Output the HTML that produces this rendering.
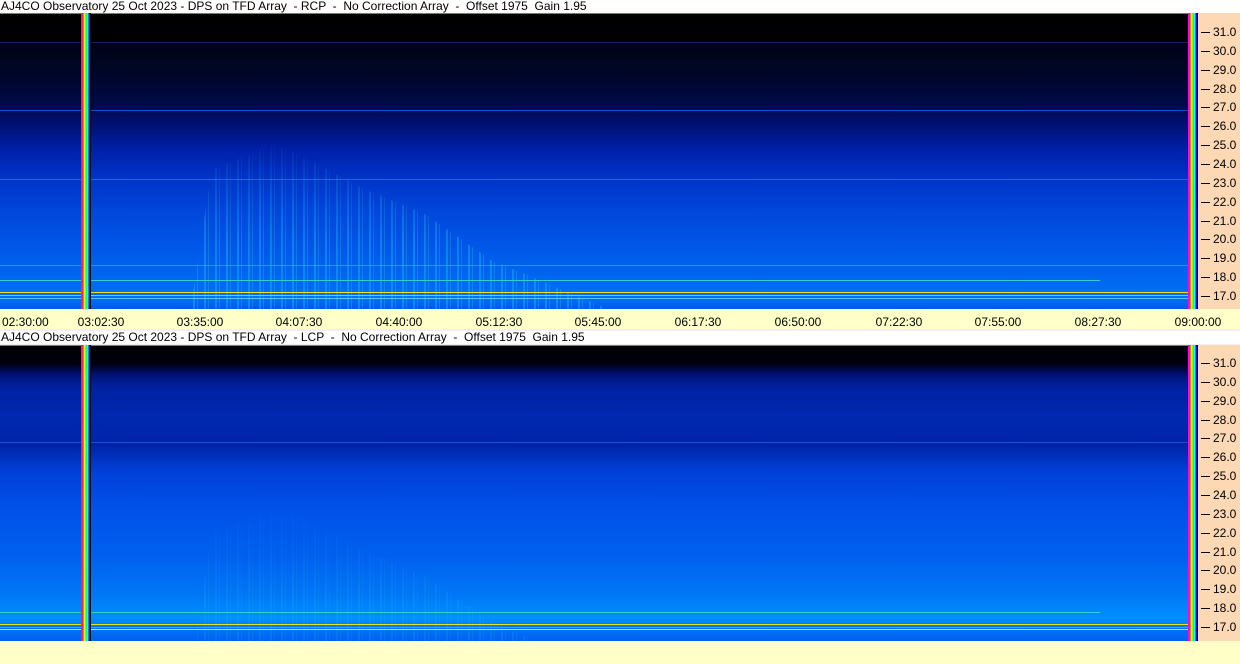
<!DOCTYPE html>
<html><head><style>
*{margin:0;padding:0}
body{width:1240px;height:664px;background:#f0f0f0;position:relative;overflow:hidden;font-family:"Liberation Sans",sans-serif}
.title{position:absolute;left:0;width:1240px;height:13px;background:#fff;font-size:12px;line-height:13px;color:#000;padding-left:1px;white-space:pre}
.panel{position:absolute;left:0;width:1190px;overflow:hidden;border-top:1px solid #00a0ff}
.p1{top:13px;height:295px;background:linear-gradient(#000000 0px,#000004 28px,#000418 32px,#000628 60px,#000a48 90px,#001070 110px,#0020a8 135px,#0034c8 165px,#0048dc 200px,#0058e8 235px,#0068f0 265px,#0070f4 285px,#0058e8 295px)}
.p2{top:345px;height:295px;background:linear-gradient(#000000 0px,#000010 18px,#001070 28px,#0020a0 40px,#0028b0 70px,#0024a8 100px,#0040d8 125px,#0050e8 160px,#0060ee 210px,#0078f6 250px,#0090ff 272px,#0070f4 285px,#0060f0 295px)}
.axis{position:absolute;left:1198px;width:42px;background:#fcd8b4}
.strip{position:absolute;width:10px;background:linear-gradient(90deg,#ff00ff 0 1px,#ff2060 1px 2px,#ff8000 2px 3px,#ffff00 3px 4px,#80ff00 4px 5px,#00ff80 5px 6px,#00ffff 6px 7px,#0080ff 7px 8px,#0000c0 8px 9px,#000 9px 10px)}
.lbl{position:absolute;font-size:12px;color:#000;left:1213px}
.tick{position:absolute;left:1201px;width:9px;height:1px;background:#000}
.time{position:absolute;top:309px;left:0;width:1240px;height:20px;background:#ffffc8}
.time span{position:absolute;top:6px;font-size:12px;transform:translateX(-50%)}
.line{position:absolute;left:0;width:1190px;height:1px}
.burst{position:absolute;left:190px;top:120px;width:430px;height:180px;background:repeating-linear-gradient(90deg,rgba(0,200,255,0) 0 3px,rgba(40,220,255,.3) 3px 5px,rgba(0,200,255,0) 5px 7px,rgba(80,240,220,.2) 7px 8px,rgba(0,0,0,0) 8px 11px);clip-path:polygon(0 100%,5% 20%,20% 5%,40% 30%,55% 45%,70% 70%,100% 100%);-webkit-mask:linear-gradient(transparent,#000 60%)}
</style></head><body>
<div class="title">AJ4CO Observatory 25 Oct 2023 - DPS on TFD Array  - RCP  -  No Correction Array  -  Offset 1975  Gain 1.95</div>
<div class="panel p1">
 <div class="line" style="top:28px;background:#102070"></div>
 <div class="line" style="top:96px;background:#1050c8"></div>
 <div class="line" style="top:165px;background:#1868e0"></div>
 <div class="burst"></div>
 <div class="line" style="top:251px;background:#40b0ff;opacity:.6"></div>
 <div class="line" style="top:266px;background:#30d0d0;width:1100px"></div>
 <div class="line" style="top:278px;background:#e8e020"></div>
 <div class="line" style="top:281px;background:#90e040"></div>
 <div class="line" style="top:284px;background:#60c0ff"></div>
</div>
<div class="strip" style="left:81px;top:13px;height:296px"></div>
<div class="strip" style="left:1188px;top:13px;height:296px"></div>
<div class="axis" style="top:13px;height:296px"></div>
<div class="time">
<span style="left:2px;transform:none">02:30:00</span><span style="left:101px">03:02:30</span><span style="left:200px">03:35:00</span><span style="left:299px">04:07:30</span><span style="left:399px">04:40:00</span><span style="left:499px">05:12:30</span><span style="left:598px">05:45:00</span><span style="left:698px">06:17:30</span><span style="left:798px">06:50:00</span><span style="left:899px">07:22:30</span><span style="left:998px">07:55:00</span><span style="left:1098px">08:27:30</span><span style="left:1198px">09:00:00</span>
</div>
<div class="title" style="top:331px">AJ4CO Observatory 25 Oct 2023 - DPS on TFD Array  - LCP  -  No Correction Array  -  Offset 1975  Gain 1.95</div>
<div class="panel p2">
 <div class="line" style="top:96px;background:#1850d0"></div>
 <div class="burst" style="opacity:.4;top:150px"></div>
 <div class="line" style="top:266px;background:#30d0d0;width:1100px"></div>
 <div class="line" style="top:278px;background:#e8e020"></div>
 <div class="line" style="top:281px;background:#e06090"></div>
 <div class="line" style="top:283px;background:#e0e040"></div>
</div>
<div class="strip" style="left:81px;top:345px;height:296px"></div>
<div class="strip" style="left:1188px;top:345px;height:296px"></div>
<div class="axis" style="top:345px;height:296px"></div>
<div style="position:absolute;top:641px;left:0;width:1240px;height:23px;background:#ffffc8"></div>
<div id="ax"></div>
<script>
var h='';var v=['31.0','30.0','29.0','28.0','27.0','26.0','25.0','24.0','23.0','22.0','21.0','20.0','19.0','18.0','17.0'];
[32,363].forEach(function(b){v.forEach(function(t,i){var y=Math.round(b+i*18.85);h+='<div class="tick" style="top:'+y+'px"></div><div class="lbl" style="top:'+(y-7)+'px">'+t+'</div>';});});
document.getElementById('ax').innerHTML=h;
</script>
</body></html>
